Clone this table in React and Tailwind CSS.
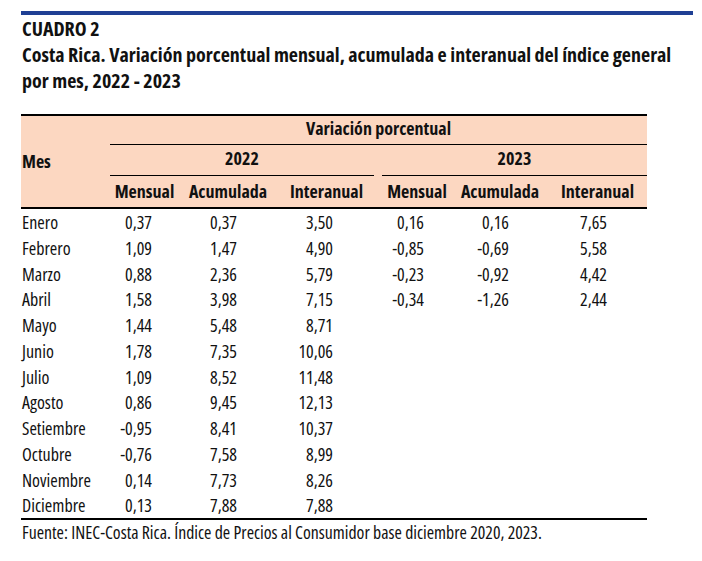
const rows2022 = [
  ["Enero", "0,37", "0,37", "3,50"],
  ["Febrero", "1,09", "1,47", "4,90"],
  ["Marzo", "0,88", "2,36", "5,79"],
  ["Abril", "1,58", "3,98", "7,15"],
  ["Mayo", "1,44", "5,48", "8,71"],
  ["Junio", "1,78", "7,35", "10,06"],
  ["Julio", "1,09", "8,52", "11,48"],
  ["Agosto", "0,86", "9,45", "12,13"],
  ["Setiembre", "-0,95", "8,41", "10,37"],
  ["Octubre", "-0,76", "7,58", "8,99"],
  ["Noviembre", "0,14", "7,73", "8,26"],
  ["Diciembre", "0,13", "7,88", "7,88"],
];

const rows2023 = [
  ["0,16", "0,16", "7,65"],
  ["-0,85", "-0,69", "5,58"],
  ["-0,23", "-0,92", "4,42"],
  ["-0,34", "-1,26", "2,44"],
];

const cols = "grid grid-cols-[87px_73px_94px_103px_4px_70px_96px_99px]";

export default function App() {
  return (
    <div className="w-[702px] h-[561px] bg-white text-[#111] font-['Liberation_Sans_Narrow','Open_Sans','Noto_Sans',sans-serif] font-stretch-condensed overflow-hidden">
      <div className="h-[4px] w-[672px] ml-[21px] mt-[11px] bg-[#1f3f94]" />

      <div className="pl-[22px] pt-[1px] text-[20px] leading-[26px] font-bold">
        <div>CUADRO 2</div>
        <div>Costa Rica. Variación porcentual mensual, acumulada e interanual del índice general</div>
        <div>por mes, 2022 - 2023</div>
      </div>

      <div className="ml-[21px] mt-[20px] w-[626px] text-[18px]">
        <div className={`${cols} grid-rows-[29px_31px_31px] bg-[#fcd7c1] border-t-2 border-b-2 border-black font-bold`}>
          <div className="col-start-1 row-start-1 row-span-3 flex items-center pl-px">Mes</div>
          <div className="col-start-2 col-span-7 row-start-1 ml-[2px] pb-[4px] border-b border-black flex items-center justify-center">
            Variación porcentual
          </div>
          <div className="col-start-2 col-span-3 row-start-2 ml-[2px] mr-[4px] pb-[3px] border-b border-black flex items-center justify-center">
            2022
          </div>
          <div className="col-start-6 col-span-3 row-start-2 pb-[3px] border-b border-black flex items-center justify-center">
            2023
          </div>
          <div className="col-start-2 row-start-3 flex items-center justify-center">Mensual</div>
          <div className="col-start-3 row-start-3 flex items-center justify-center">Acumulada</div>
          <div className="col-start-4 row-start-3 flex items-center justify-center">Interanual</div>
          <div className="col-start-6 row-start-3 flex items-center justify-center">Mensual</div>
          <div className="col-start-7 row-start-3 flex items-center justify-center">Acumulada</div>
          <div className="col-start-8 row-start-3 flex items-center justify-center">Interanual</div>
        </div>

        <div className="border-b-2 border-black">
          {rows2022.map((r, i) => {
            const r23 = rows2023[i];
            return (
              <div key={r[0]} className={`${cols} h-[25.75px] items-center`}>
                <div className="pl-px">{r[0]}</div>
                <div className="text-right pr-[29px]">{r[1]}</div>
                <div className="text-right pr-[38px]">{r[2]}</div>
                <div className="text-right pr-[45px]">{r[3]}</div>
                <div />
                <div className="text-right pr-[28px]">{r23 ? r23[0] : ""}</div>
                <div className="text-right pr-[39px]">{r23 ? r23[1] : ""}</div>
                <div className="text-right pr-[40px]">{r23 ? r23[2] : ""}</div>
              </div>
            );
          })}
        </div>

        <div className="pl-px leading-[24px] text-[17.8px] whitespace-nowrap">
          Fuente: INEC-Costa Rica. Índice de Precios al Consumidor base diciembre 2020, 2023.
        </div>
      </div>
    </div>
  );
}
